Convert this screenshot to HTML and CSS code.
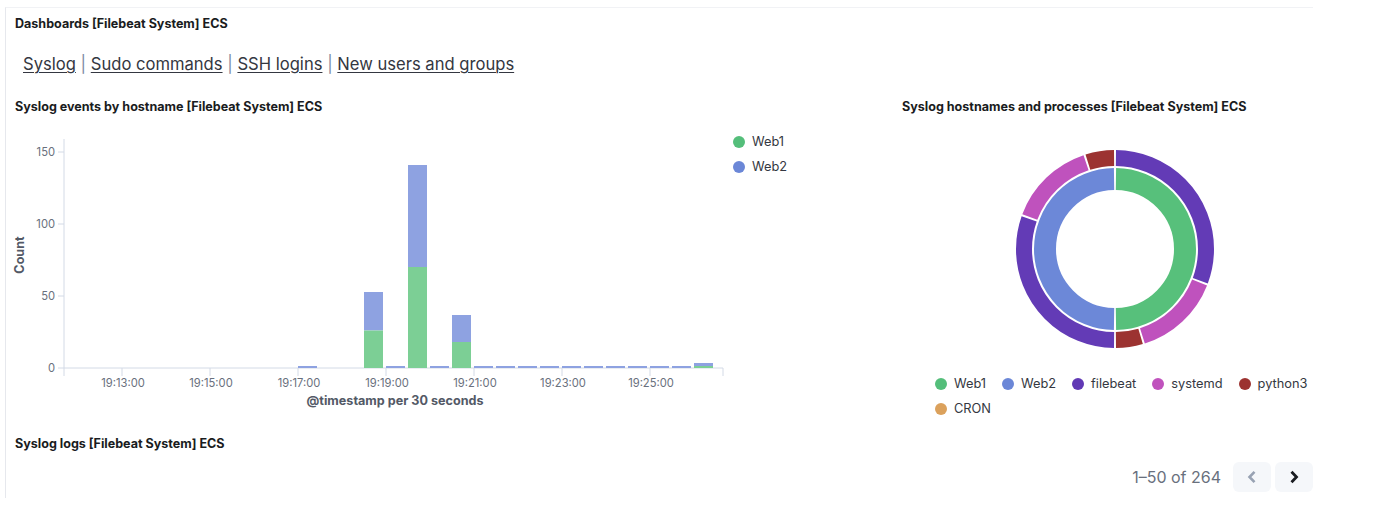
FILE: index.html
```html
<!DOCTYPE html>
<html lang="en">
<head>
<meta charset="utf-8">
<title>[Filebeat System] Syslog dashboard ECS</title>
<link rel="stylesheet" href="styles.css">
</head>
<body>
<div class="frame">
  <section class="md-panel">
    <h2 class="ptitle">Dashboards [Filebeat System] ECS</h2>
    <p class="links"><a href="#">Syslog</a> <span class="sep">|</span> <a href="#">Sudo commands</a> <span class="sep">|</span> <a href="#">SSH logins</a> <span class="sep">|</span> <a href="#">New users and groups</a></p>
  </section>

  <div class="charts">
    <section class="xy-panel">
      <h2 class="ptitle">Syslog events by hostname [Filebeat System] ECS</h2>
      <div class="xy-body">
        <svg class="xy" width="721" height="290" viewBox="0 0 721 290">
          <g class="axis">
            <line x1="58" y1="16" x2="58" y2="245"/>
            <line x1="52" y1="29" x2="58" y2="29"/>
            <line x1="52" y1="101" x2="58" y2="101"/>
            <line x1="52" y1="173" x2="58" y2="173"/>
            <line x1="52" y1="245" x2="58" y2="245"/>
            <line x1="58" y1="245" x2="717" y2="245"/>
            <line x1="58" y1="245" x2="58" y2="253"/>
            <line x1="116" y1="245" x2="116" y2="253"/>
            <line x1="204" y1="245" x2="204" y2="253"/>
            <line x1="292" y1="245" x2="292" y2="253"/>
            <line x1="380" y1="245" x2="380" y2="253"/>
            <line x1="468" y1="245" x2="468" y2="253"/>
            <line x1="556" y1="245" x2="556" y2="253"/>
            <line x1="644" y1="245" x2="644" y2="253"/>
            <line x1="717" y1="245" x2="717" y2="253"/>
          </g>
          <g class="ylabels">
            <text x="49" y="33">150</text>
            <text x="49" y="105">100</text>
            <text x="49" y="177">50</text>
            <text x="49" y="249">0</text>
          </g>
          <g class="xlabels">
            <text x="117" y="264">19:13:00</text>
            <text x="205" y="264">19:15:00</text>
            <text x="293" y="264">19:17:00</text>
            <text x="381" y="264">19:19:00</text>
            <text x="469" y="264">19:21:00</text>
            <text x="557" y="264">19:23:00</text>
            <text x="645" y="264">19:25:00</text>
          </g>
          <text class="axis-title" x="389" y="282">@timestamp per 30 seconds</text>
          <text class="axis-title" transform="translate(18 132) rotate(-90)">Count</text>
          <g class="bars-web2">
            <rect x="292" y="243" width="19" height="2"/>
            <rect x="358" y="169" width="19" height="38.5"/>
            <rect x="380" y="243" width="19" height="2"/>
            <rect x="402" y="42" width="19" height="102"/>
            <rect x="424" y="243" width="19" height="2"/>
            <rect x="446" y="192" width="19" height="27"/>
            <rect x="468" y="243" width="19" height="2"/>
            <rect x="490" y="243" width="19" height="2"/>
            <rect x="512" y="243" width="19" height="2"/>
            <rect x="534" y="243" width="19" height="2"/>
            <rect x="556" y="243" width="19" height="2"/>
            <rect x="578" y="243" width="19" height="2"/>
            <rect x="600" y="243" width="19" height="2"/>
            <rect x="622" y="243" width="19" height="2"/>
            <rect x="644" y="243" width="19" height="2"/>
            <rect x="666" y="243" width="19" height="2"/>
            <rect x="688" y="240" width="19" height="3"/>
          </g>
          <g class="bars-web1">
            <rect x="358" y="207.5" width="19" height="37.5"/>
            <rect x="402" y="144" width="19" height="101"/>
            <rect x="446" y="219" width="19" height="26"/>
            <rect x="688" y="243" width="19" height="2"/>
          </g>
        </svg>
        <ul class="legend-v">
          <li><span class="dot c-web1"></span>Web1</li>
          <li><span class="dot c-web2"></span>Web2</li>
        </ul>
      </div>
    </section>

    <section class="pie-panel">
      <h2 class="ptitle">Syslog hostnames and processes [Filebeat System] ECS</h2>
      <svg class="donut" width="420" height="210" viewBox="0 0 420 210">
        <g transform="rotate(-90 222 104)" fill="none">
          <circle cx="222" cy="104" r="70" pathLength="360" stroke="#57c07b" stroke-width="22" stroke-dasharray="178.4 181.6" stroke-dashoffset="-0.8"/>
          <circle cx="222" cy="104" r="70" pathLength="360" stroke="#6c88d8" stroke-width="22" stroke-dasharray="178.4 181.6" stroke-dashoffset="-180.8"/>
          <circle cx="222" cy="104" r="91" pathLength="360" stroke="#633bb6" stroke-width="16" stroke-dasharray="109.8 250.2" stroke-dashoffset="-0.6"/>
          <circle cx="222" cy="104" r="91" pathLength="360" stroke="#bf52bd" stroke-width="16" stroke-dasharray="50.8 309.2" stroke-dashoffset="-111.6"/>
          <circle cx="222" cy="104" r="91" pathLength="360" stroke="#9c3331" stroke-width="16" stroke-dasharray="15.8 344.2" stroke-dashoffset="-163.6"/>
          <circle cx="222" cy="104" r="91" pathLength="360" stroke="#633bb6" stroke-width="16" stroke-dasharray="108.8 251.2" stroke-dashoffset="-180.6"/>
          <circle cx="222" cy="104" r="91" pathLength="360" stroke="#bf52bd" stroke-width="16" stroke-dasharray="50.8 309.2" stroke-dashoffset="-290.6"/>
          <circle cx="222" cy="104" r="91" pathLength="360" stroke="#9c3331" stroke-width="16" stroke-dasharray="16.8 343.2" stroke-dashoffset="-342.6"/>
        </g>
      </svg>
      <ul class="legend-h">
        <li><span class="dot c-web1"></span>Web1</li>
        <li><span class="dot c-web2"></span>Web2</li>
        <li><span class="dot c-filebeat"></span>filebeat</li>
        <li><span class="dot c-systemd"></span>systemd</li>
        <li><span class="dot c-python"></span>python3</li>
        <li><span class="dot c-cron"></span>CRON</li>
      </ul>
    </section>
  </div>

  <section class="logs-panel">
    <h2 class="ptitle">Syslog logs [Filebeat System] ECS</h2>
    <div class="pager">
      <span class="pager-count">1–50 of 264</span>
      <button class="pbtn prev" aria-label="Previous page">
        <svg width="16" height="16" viewBox="0 0 16 16"><polyline points="10.5,2.8 5.5,8 10.5,13.2" fill="none" stroke="#98a2b3" stroke-width="2.6"/></svg>
      </button>
      <button class="pbtn next" aria-label="Next page">
        <svg width="16" height="16" viewBox="0 0 16 16"><polyline points="5.5,2.8 10.5,8 5.5,13.2" fill="none" stroke="#1a1c21" stroke-width="2.8"/></svg>
      </button>
    </div>
  </section>
</div>
</body>
</html>
```

FILE: styles.css
```css
* { box-sizing: border-box; }

html, body {
  margin: 0;
  padding: 0;
  background: #ffffff;
}

body {
  font-family: Inter, "Noto Sans", "Liberation Sans", sans-serif;
  color: #343741;
  width: 1377px;
  height: 505px;
  overflow: hidden;
}

.frame {
  margin: 7px 0 0 5px;
  width: 1308px;
  height: 491px;
  border-top: 1px solid #f1f2f5;
  border-left: 1px solid #e6e8ed;
}

.ptitle {
  margin: 0;
  padding-left: 9px;
  font-size: 12.55px;
  line-height: 16px;
  font-weight: 700;
  color: #1a1c21;
  white-space: nowrap;
}

/* markdown panel */
.md-panel {
  padding-top: 8px;
}

.links {
  margin: 20px 0 0 0;
  padding-left: 17px;
  font-size: 16.6px;
  line-height: 24px;
  color: #343741;
}

.links a {
  color: #343741;
  text-decoration: underline;
  text-underline-offset: 2px;
  text-decoration-thickness: 1px;
}

.sep {
  color: #7d8aa3;
}

/* charts row */
.charts {
  display: flex;
  margin-top: 23px;
}

.xy-panel {
  width: 887px;
}

.xy-body {
  display: flex;
  margin-top: 8px;
}

.xy {
  display: block;
  flex: none;
}

.axis line {
  stroke: #d3dae6;
  stroke-width: 1;
}

.ylabels text {
  font-size: 11.2px;
  fill: #69707d;
  text-anchor: end;
}

.xlabels text {
  font-size: 11.2px;
  fill: #69707d;
  text-anchor: middle;
}

.axis-title {
  font-size: 12.6px;
  font-weight: 700;
  fill: #535966;
  text-anchor: middle;
}

.bars-web2 rect { fill: #8ea2e1; }
.bars-web1 rect { fill: #7ccf95; }

.legend-v {
  list-style: none;
  margin: 0;
  padding: 11px 0 0 6px;
  display: flex;
  flex-direction: column;
  gap: 9px;
}

.legend-v li,
.legend-h li {
  display: flex;
  align-items: center;
  gap: 7px;
  font-size: 12.8px;
  line-height: 16px;
  color: #343741;
  white-space: nowrap;
}

.dot {
  width: 12px;
  height: 12px;
  border-radius: 50%;
  flex: none;
}

.c-web1 { background: #54be7a; }
.c-web2 { background: #6b87d7; }
.c-filebeat { background: #6139b5; }
.c-systemd { background: #c052bd; }
.c-python { background: #9c3230; }
.c-cron { background: #dba15c; }

.pie-panel {
  width: 420px;
}

.donut {
  display: block;
  margin-top: 30px;
}

.legend-h {
  list-style: none;
  margin: 21px 0 0 0;
  padding: 0 0 0 42px;
  width: 432px;
  display: flex;
  flex-wrap: wrap;
  column-gap: 16px;
  row-gap: 9px;
}

/* logs panel */
.logs-panel {
  margin-top: 19px;
}

.pager {
  display: flex;
  justify-content: flex-end;
  align-items: center;
  margin-top: 10px;
  gap: 4px;
}

.pager-count {
  font-size: 16px;
  line-height: 20px;
  color: #69707d;
  margin-right: 8px;
}

.pbtn {
  width: 38px;
  height: 30px;
  border: none;
  border-radius: 6px;
  background: #f5f7fa;
  padding: 0;
  display: flex;
  align-items: center;
  justify-content: center;
}

.pbtn svg { display: block; }
```
